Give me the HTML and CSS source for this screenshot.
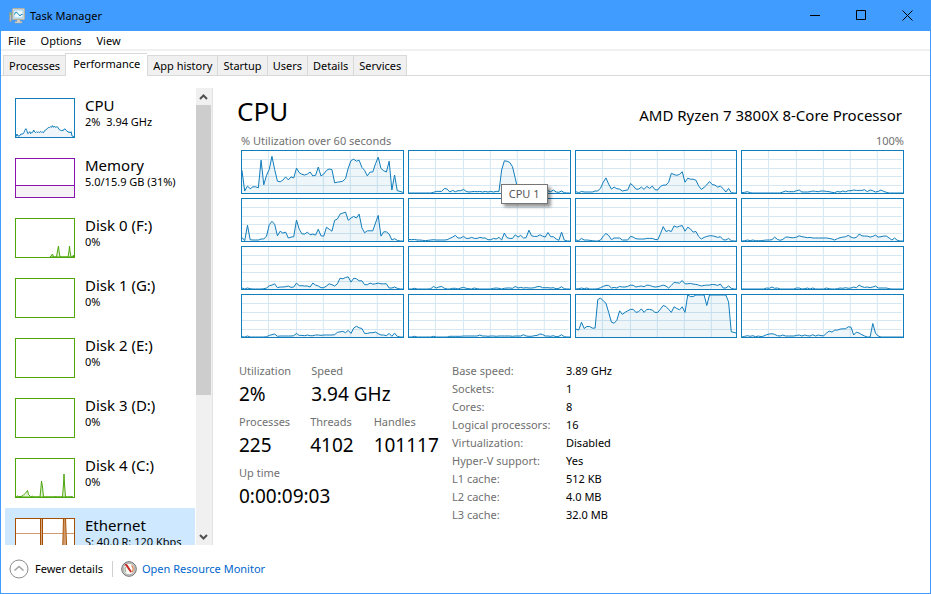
FILE: index.html
```html
<!DOCTYPE html>
<html lang="en">
<head>
<meta charset="utf-8">
<title>Task Manager</title>
<link rel="stylesheet" href="styles.css">
</head>
<body>
<div class="window">
  <header class="titlebar">
    <svg class="app-icon" width="16" height="16" viewBox="0 0 16 16" aria-hidden="true">
      <path d="M.5 4.500h2v9h-2z" fill="#b9bcbb" stroke="#8d9291" stroke-width=".6"/>
      <path d="M1 6h1.200" stroke="#5bd23f" stroke-width="1.400"/>
      <path d="M8 11h3v2.500h2V15H6v-1.500h2z" fill="#d9d4c8" stroke="#a9a59b" stroke-width=".5"/>
      <rect x="3.500" y=".5" width="12" height="11" rx="1" fill="#e4e0d5" stroke="#b5b0a4"/>
      <rect x="5" y="2" width="9" height="8" fill="#e8f8ff" stroke="#79bde2" stroke-width=".7"/>
      <path d="M5.500 6.500 7 4l2 1.500L11 8l1-1.500h1.500" fill="none" stroke="#2288bd"/>
    </svg>
    <h1 class="title">Task Manager</h1>
    <div class="window-buttons">
      <button type="button" aria-label="Minimize"><svg width="11" height="11" viewBox="0 0 11 11"><path d="M0 5.500h10"/></svg></button>
      <button type="button" aria-label="Maximize"><svg width="11" height="11" viewBox="0 0 11 11"><path d="M.5.5h9v9h-9z"/></svg></button>
      <button type="button" aria-label="Close"><svg width="11" height="11" viewBox="0 0 11 11"><path d="m.5.500 10 10m0-10-10 10"/></svg></button>
    </div>
  </header>
  <nav class="menu">
    <button type="button">File</button>
    <button type="button">Options</button>
    <button type="button">View</button>
  </nav>
  <div class="tabs" role="tablist">
    <button type="button" role="tab">Processes</button>
    <button type="button" role="tab" class="selected" aria-selected="true">Performance</button>
    <button type="button" role="tab">App history</button>
    <button type="button" role="tab">Startup</button>
    <button type="button" role="tab">Users</button>
    <button type="button" role="tab">Details</button>
    <button type="button" role="tab">Services</button>
  </div>

  <div class="content">
    <aside class="sidebar">
      <ul class="resources">
        <li><button type="button" class="resource cpu">
          <svg class="thumb" viewBox="0 0 174 114" preserveAspectRatio="none" data-thumb></svg>
          <span class="label"><span class="name">CPU</span><span class="value">2%&nbsp; 3.94 GHz</span></span>
        </button></li>
        <li><button type="button" class="resource memory">
          <svg class="thumb" viewBox="0 0 58 38"><path class="area" d="M-1 26.500h60V39H-1z"/></svg>
          <span class="label"><span class="name">Memory</span><span class="value">5.0/15.9 GB (31%)</span></span>
        </button></li>
        <li><button type="button" class="resource disk">
          <svg class="thumb" viewBox="0 0 58 38"><path class="area" d="M34 38l1-1 1.500-2 1 3h3l1-6 1-5 .5 5 1 6h8l1-6 .5-5 .5 5 1 6h1.500l1-2v2z"/></svg>
          <span class="label"><span class="name">Disk 0 (F:)</span><span class="value">0%</span></span>
        </button></li>
        <li><button type="button" class="resource disk">
          <svg class="thumb" viewBox="0 0 58 38"></svg>
          <span class="label"><span class="name">Disk 1 (G:)</span><span class="value">0%</span></span>
        </button></li>
        <li><button type="button" class="resource disk">
          <svg class="thumb" viewBox="0 0 58 38"></svg>
          <span class="label"><span class="name">Disk 2 (E:)</span><span class="value">0%</span></span>
        </button></li>
        <li><button type="button" class="resource disk">
          <svg class="thumb" viewBox="0 0 58 38"></svg>
          <span class="label"><span class="name">Disk 3 (D:)</span><span class="value">0%</span></span>
        </button></li>
        <li><button type="button" class="resource disk">
          <svg class="thumb" viewBox="0 0 58 38"><path class="area" d="M0 38 1.500 37l1 .5H5l2-1 2-2 1-1 1.500-2 1 4 2 2h1l1-.5 1 1h6.500l1-10 .5-6 1 6 1 10h11l1-1 1 1h6l1-13 .5-10 .5 10 1 13h5l1-1 1 1z"/></svg>
          <span class="label"><span class="name">Disk 4 (C:)</span><span class="value">0%</span></span>
        </button></li>
        <li><button type="button" class="resource ethernet active">
          <svg class="thumb" viewBox="0 0 58 38"><path class="guide" d="M0 14.500h58"/><path class="area" d="M24.500 38V-1h2V38z"/><path class="area" d="M46.500 38 47.500-1h2L51 38z"/><path class="guide" d="M48.500 0v38"/></svg>
          <span class="label"><span class="name">Ethernet</span><span class="value">S: 40.0 R: 120 Kbps</span></span>
        </button></li>
      </ul>
      <div class="scrollbar">
        <button type="button" aria-label="Scroll up"><svg width="9" height="6" viewBox="0 0 9 6"><path d="m1 5 3.500-3.500L8 5"/></svg></button>
        <div class="track"><div class="handle"></div></div>
        <button type="button" aria-label="Scroll down"><svg width="9" height="6" viewBox="0 0 9 6"><path d="m1 1 3.500 3.500L8 1"/></svg></button>
      </div>
    </aside>

    <main class="panel">
      <div class="heading">
        <h2>CPU</h2>
        <p>AMD Ryzen 7 3800X 8-Core Processor</p>
      </div>
      <div class="axis"><span>% Utilization over 60 seconds</span><span>100%</span></div>
      <div class="charts" id="charts"></div>

      <div class="stats">
        <div class="counters">
          <dl>
            <div><dt>Utilization</dt><dd>2%</dd></div>
            <div><dt>Speed</dt><dd>3.94 GHz</dd></div>
          </dl>
          <dl>
            <div><dt>Processes</dt><dd>225</dd></div>
            <div><dt>Threads</dt><dd>4102</dd></div>
            <div><dt>Handles</dt><dd>101117</dd></div>
          </dl>
          <dl>
            <div><dt>Up time</dt><dd>0:00:09:03</dd></div>
          </dl>
        </div>
        <dl class="facts">
          <dt>Base speed:</dt><dd>3.89 GHz</dd>
          <dt>Sockets:</dt><dd>1</dd>
          <dt>Cores:</dt><dd>8</dd>
          <dt>Logical processors:</dt><dd>16</dd>
          <dt>Virtualization:</dt><dd>Disabled</dd>
          <dt>Hyper-V support:</dt><dd>Yes</dd>
          <dt>L1 cache:</dt><dd>512 KB</dd>
          <dt>L2 cache:</dt><dd>4.0 MB</dd>
          <dt>L3 cache:</dt><dd>32.0 MB</dd>
        </dl>
      </div>
    </main>
  </div>

  <footer class="footer">
    <button type="button" class="fewer">
      <svg width="20" height="20" viewBox="0 0 20 20" aria-hidden="true"><circle cx="10" cy="10" r="9" fill="#fff" stroke="#8c8c8c"/><path d="m5.500 11.500 4.500-4 4.500 4" fill="none" stroke="#a3a3a3" stroke-width="1.600"/></svg>
      Fewer details
    </button>
    <a href="#monitor" class="monitor">
      <svg width="16" height="16" viewBox="0 0 16 16" aria-hidden="true"><circle cx="8" cy="8" r="7.300" fill="#d2d2d0" stroke="#6d6d6d"/><circle cx="8" cy="8" r="5.700" fill="#fbfaf7" stroke="#9b9b9b" stroke-width=".7"/><path d="M10.500 4.500a4.300 4.300 0 0 1 .5 6.500" fill="none" stroke="#e0844e" stroke-width="1.300"/><path d="M4.500 6a4.300 4.300 0 0 0 .5 5" fill="none" stroke="#a9b8a0" stroke-width="1.200"/><path d="m3.800 3.200 2.200.4 4.500 7-1 .6z" fill="#d21c1c" stroke="#b51414" stroke-width=".5"/></svg>
      Open Resource Monitor
    </a>
  </footer>
</div>
<script src="charts.js"></script>
</body>
</html>
```
FILE: styles.css
```css
* { box-sizing: border-box; }

body {
  margin: 0;
  font: 11px/16px "Noto Sans", "Open Sans", sans-serif;
  color: #000;
}

button {
  padding: 0;
  border: 0;
  background: none;
  font: inherit;
  color: inherit;
}

h1, h2, p, ul, dl, dd { margin: 0; padding: 0; }
ul { list-style: none; }

.window {
  display: flex;
  flex-direction: column;
  height: 100vh;
  border: 1px solid #409cff;
  border-top: 0;
  background: #fff;
}

.titlebar {
  display: flex;
  flex: none;
  align-items: center;
  gap: 5px;
  height: 31px;
  padding-left: 8px;
  background: #409cff;
}

.title { flex: 1; font-size: 11px; font-weight: 400; }

.window-buttons { display: flex; align-self: stretch; }
.window-buttons button { width: 46px; }
.window-buttons svg { display: block; margin: auto; fill: none; stroke: #000; }

.menu {
  display: flex;
  flex: none;
  gap: 15px;
  height: 20px;
  padding: 2px 0 0 7px;
  border-bottom: 2px solid #f0f0f0;
}

.tabs {
  display: flex;
  flex: none;
  align-items: flex-end;
  height: 25px;
  padding-left: 2px;
  border-bottom: 1px solid #d9d9d9;
}

.tabs button {
  height: 20px;
  padding: 0 5px;
  border: 1px solid #d9d9d9;
  border-width: 1px 0 0 1px;
  background: #f0f0f0;
}

.tabs button:last-child { border-right-width: 1px; }

.tabs .selected {
  height: 23px;
  margin-bottom: -1px;
  padding: 0 7px 3px;
  background: #fff;
}

.content { display: flex; flex: 1; min-height: 0; }

.sidebar {
  display: flex;
  flex: none;
  width: 208px;
  margin: 12px 0 0 4px;
}

.resources { flex: 1; overflow: hidden; }

.resource {
  display: flex;
  gap: 10px;
  width: 190px;
  height: 60px;
  padding: 8px 0 0 10px;
  text-align: left;
}

.resource.active { background: #cde8ff; }

.thumb {
  flex: none;
  width: 60px;
  height: 40px;
  margin-top: 2px;
  border: 1px solid var(--line);
  background: #fff;
}

.label { display: flex; flex-direction: column; white-space: nowrap; }
.name { font-size: 15px; line-height: 18px; }

.cpu { --line: #117dbb; --fill: #eff5fa; }
.memory { --line: #8b12ae; --fill: #f4f2f4; }
.disk { --line: #4da60c; --fill: #e3f2d6; }
.ethernet { --line: #a74f01; --fill: #d9a981; }

.area { fill: var(--fill); stroke: var(--line); vector-effect: non-scaling-stroke; }
.guide { stroke: #cf9c72; }

.scrollbar {
  display: flex;
  flex: none;
  flex-direction: column;
  width: 17px;
  border-right: 1px solid #e3e3e3;
  background: #f0f0f0;
}

.scrollbar button { width: 15px; height: 17px; }
.scrollbar svg { display: block; margin: auto; fill: none; stroke: #505050; stroke-width: 2; }
.track { flex: 1; }
.handle { width: 15px; height: 68.5%; background: #cdcdcd; }

.panel { flex: 1; min-width: 0; padding: 20px 26px 0 24px; }

.heading { display: flex; justify-content: space-between; align-items: baseline; height: 36px; }
.heading h2 { font-size: 26px; line-height: 30px; font-weight: 400; }
.heading p { padding-right: 2px; font-size: 15px; }

.axis {
  display: flex;
  justify-content: space-between;
  padding: 1px 0 1px 4px;
  color: #707070;
}

.charts {
  display: grid;
  grid-template-columns: repeat(4, 1fr);
  grid-auto-rows: 44px;
  gap: 4px;
  padding-left: 4px;
}

.chart { --line: #117dbb; --fill: #117dbb12; position: relative; }
.chart svg { display: block; width: 100%; height: 100%; border: 1px solid var(--line); }
.chart .grid { fill: none; stroke: #d5e7f2; vector-effect: non-scaling-stroke; }

.tooltip {
  position: absolute;
  z-index: 1;
  top: 34px;
  left: 93px;
  padding: 1px 7px;
  border: 1px solid #767676;
  background: #fff;
  box-shadow: 3px 3px 3px #0006;
  color: #575757;
  white-space: nowrap;
}

.stats { display: flex; gap: 12px; padding: 25px 0 0 2px; }
.counters { flex: none; width: 201px; }
.counters dl { display: flex; gap: 20px; height: 51px; }
.counters dd { font-size: 19px; line-height: 30px; }

dt { color: #707070; }
.facts { display: grid; grid-template-columns: 114px auto; grid-auto-rows: 18px; }

.footer { display: flex; flex: none; align-items: center; height: 48px; padding-left: 8px; }
.fewer { display: flex; align-items: center; gap: 6px; }
.monitor {
  display: flex;
  align-items: center;
  gap: 5px;
  margin-left: 9px;
  padding-left: 8px;
  border-left: 1px solid #d0d0d0;
  color: #0066cc;
  text-decoration: none;
}
```
FILE: charts.js
```js
// Load samples per logical processor, oldest first; 128 is full load.
const FULL = 128;
const cores = [
  [68,6,21,13,19,19,16,100,25,54,72,112,72,36,34,39,49,40,49,46,76,62,57,55,58,64,52,54,79,52,58,69,73,71,31,33,34,36,44,76,99,103,97,100,78,69,52,64,64,89,109,75,68,64,97,9,55,7,5,2],
  [0,0,0,0,0,0,0,0,0,2,5,5,5,14,12,3,8,4,7,7,11,5,3,4,5,4,5,3,5,3,5,3,5,5,70,98,97,93,80,45,8,4,5,3,5,3,5,3,5,3,4,7,4,9,3,2,6,1,0,0],
  [4,1,5,3,3,3,3,6,6,15,33,46,27,12,18,13,12,6,8,9,29,22,12,12,18,11,20,14,21,10,9,20,24,24,33,60,56,54,57,65,33,45,42,42,39,22,11,17,25,35,26,24,18,21,13,3,14,1,0,0],
  [1,2,4,1,0,0,0,0,0,0,0,0,0,0,0,3,6,4,4,4,7,9,3,3,3,4,6,5,4,6,6,5,4,2,1,5,3,6,4,7,7,9,8,8,8,10,4,9,7,3,5,9,5,2,0,0,0,0,0,0],
  [11,1,48,4,3,3,3,6,6,15,50,60,51,16,30,24,27,9,12,13,64,36,22,21,27,19,21,18,36,16,15,42,36,30,63,67,82,85,88,63,70,75,70,82,40,25,31,31,31,55,78,15,28,28,21,3,7,2,0,0],
  [5,4,5,3,3,2,1,2,3,4,3,3,3,3,4,8,12,17,9,9,14,8,8,11,8,8,11,9,9,4,4,8,6,11,3,24,10,8,8,19,12,17,9,10,33,16,14,14,19,15,12,26,13,13,6,2,27,3,0,0],
  [3,1,8,3,3,2,1,0,0,3,15,23,17,4,9,9,9,3,3,3,14,12,7,6,6,6,8,8,8,5,4,22,44,29,32,29,46,42,45,47,30,42,37,27,29,14,6,11,14,16,16,14,11,13,4,3,8,1,0,0],
  [0,1,3,1,3,1,1,1,2,3,3,4,12,5,2,5,12,12,10,10,12,16,13,12,10,11,9,9,9,9,9,9,8,6,3,7,10,12,13,17,12,9,11,21,16,15,15,12,14,18,12,13,15,15,9,3,9,2,0,0],
  [3,0,3,1,0,0,0,0,1,3,10,12,16,4,6,6,7,9,5,6,18,10,10,9,9,6,18,12,9,4,4,9,16,13,9,16,33,31,35,37,21,33,31,25,25,13,13,18,15,16,18,16,16,16,3,3,6,2,0,0],
  [0,0,2,0,0,0,0,0,1,8,3,6,8,2,0,0,2,2,0,3,5,2,1,0,3,1,0,0,0,0,0,2,3,2,0,2,3,3,2,8,3,5,3,4,3,3,4,7,8,4,4,4,3,4,1,2,7,1,0,0],
  [0,1,3,1,3,0,0,0,1,4,8,11,11,3,5,3,8,6,6,8,12,11,6,8,9,7,12,11,8,6,7,9,12,9,3,11,20,19,18,26,16,16,17,15,14,12,9,11,12,12,14,13,11,15,3,3,9,2,0,0],
  [0,0,0,0,0,0,0,0,0,3,2,6,2,3,0,0,0,0,0,0,3,3,0,1,3,0,3,0,0,0,0,3,1,0,0,1,3,2,4,2,3,6,4,12,7,5,6,4,6,9,3,3,3,3,1,0,0,0,0,0],
  [1,0,3,0,0,0,0,0,0,1,5,7,9,2,3,3,3,3,3,4,11,5,5,4,6,4,4,6,6,5,6,6,6,6,7,14,16,17,13,20,11,27,33,28,26,11,11,13,13,15,10,6,6,4,11,2,12,2,0,0],
  [0,0,2,0,0,0,0,0,0,2,0,0,0,0,0,2,2,2,2,2,3,3,3,3,3,3,6,3,3,2,3,3,2,3,3,3,3,3,2,3,3,3,7,3,2,2,4,5,9,8,3,3,2,4,1,2,7,1,0,0],
  [24,21,45,26,32,32,27,27,114,119,110,103,75,45,42,51,80,69,75,80,84,84,75,77,86,75,84,84,82,75,75,85,96,93,84,75,92,87,83,92,75,128,123,123,128,128,128,128,96,128,128,128,128,128,128,128,107,16,14,12],
  [0,2,4,2,4,1,3,1,3,7,9,10,8,4,3,6,3,3,3,3,5,6,3,6,4,3,7,3,6,4,4,12,18,15,21,21,24,25,25,31,30,6,15,12,7,3,0,0,41,12,3,0,0,0,0,0,0,0,0,0]
];
const average = [1,9,3,3,4,9,9,9,13,20,25,19,10,12,16,10,14,14,21,15,13,16,13,16,13,17,14,15,13,19,20,24,25,29,28,31,29,34,29,33,29,30,31,27,22,21,19,20,19,24,24,20,18,14,16,12,16,3,2,0];

// Closed outline of a series; its side and bottom edges fall outside the box.
function areaPath(samples, width, height, full) {
  const step = width / (samples.length - 1);
  const points = samples.map((v, i) =>
    (i * step).toFixed(1) + " " + (height - v * height / full).toFixed(1));
  return `M-9 ${height + 9}L-9 ${height}L${points.join("L")}L${width + 9} ${height}V${height + 9}Z`;
}

const gridPath = [27, 55, 82, 109, 136].map(x => `M${x - 0.5} 0V42`).join("") +
  [9, 18, 26, 35].map(y => `M0 ${y - 0.5}H160`).join("");

document.getElementById("charts").innerHTML = cores.map((samples, i) => `
  <div class="chart">
    <svg viewBox="0 0 161 42" preserveAspectRatio="none" role="img" aria-label="CPU ${i}">
      <path class="grid" d="${gridPath}"/>
      <path class="area" d="${areaPath(samples, 161, 42, FULL)}"/>
    </svg>
    ${i === 1 ? '<div class="tooltip" role="tooltip">CPU 1</div>' : ""}
  </div>`).join("");

document.querySelector("[data-thumb]").innerHTML =
  `<path class="area" d="${areaPath(average, 174, 114, 114)}"/>`;
```
